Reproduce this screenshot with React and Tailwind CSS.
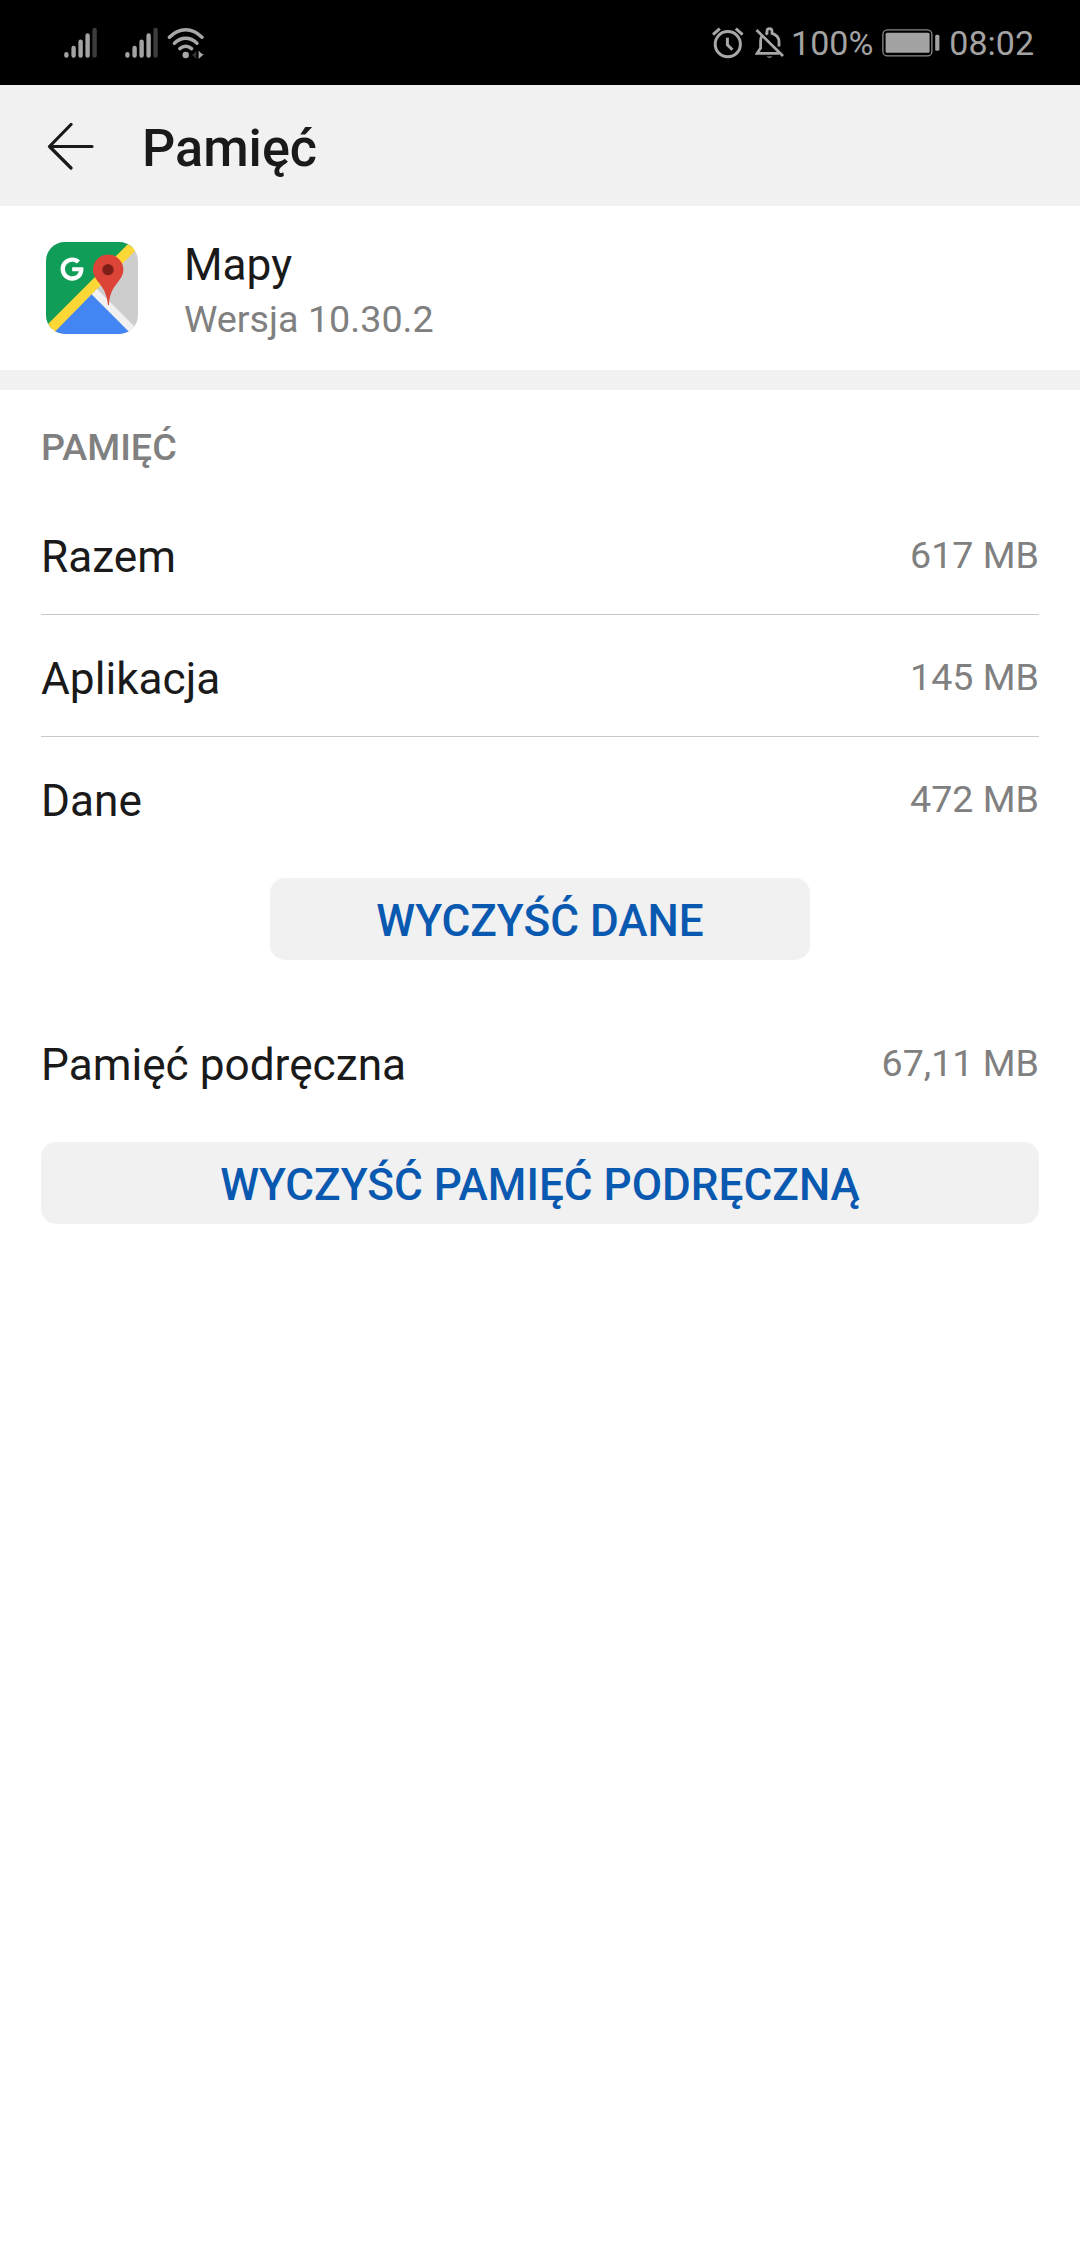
import { FaGoogle } from 'react-icons/fa';

const storage = [
  { label: 'Razem', value: '617 MB' },
  { label: 'Aplikacja', value: '145 MB' },
  { label: 'Dane', value: '472 MB' },
];

const SignalIcon = () => (
  <svg className="h-8 w-[34px]" viewBox="0 0 34 32" strokeWidth="4.4" strokeLinecap="round" stroke="#a3a3a3">
    <path d="M2.4 28.6v-1.4M9.6 28.6v-7.6M16.6 28.6V14.8M23.6 28.6V8.4" />
    <path d="M30.6 28.6V3" stroke="#3c3c3c" />
  </svg>
);

const WifiIcon = () => (
  <svg className="h-8 w-[38px]" viewBox="0 0 38 32" fill="none" stroke="#a8a8a8" strokeWidth="3.4" strokeLinecap="round">
    <path d="M2.4 10.2Q10 2.8 18.7 2.8T35 10.2" />
    <path d="M7.4 16.2Q12.6 11.2 18.7 11.2T30 16.2" />
    <path d="M12.8 21.6Q15.6 19.2 18.7 19.2T24.6 21.6" />
    <circle cx="18.7" cy="28" r="3.2" fill="#a8a8a8" stroke="none" />
    <path d="M29.4 24v8l-4.4-4z" fill="#333" stroke="none" />
    <path d="M31.6 23.5v8.5l5.2-4.8-2.4-.8z" fill="#a8a8a8" stroke="none" />
  </svg>
);

const AlarmIcon = () => (
  <svg className="h-[32px] w-[32px]" viewBox="0 0 32 32" fill="none" stroke="#a8a8a8" strokeWidth="3">
    <circle cx="15.8" cy="17.2" r="12.6" />
    <path d="M15.4 10.8v7l5 5" />
    <path d="M1 7.6l6.8-6M23.8 1.6l6.8 6" />
  </svg>
);

const BellOffIcon = () => (
  <svg className="h-[32px] w-[30px]" viewBox="0 0 30 32" fill="none" stroke="#a8a8a8" strokeWidth="2.8">
    <path d="M1.5 3L28 29" />
    <path d="M6.5 9.5Q5.6 11.5 5.6 14V21L2 26.4H24" />
    <path d="M10.5 7.2L12 6.4V4.2a2.5 2.5 0 0 1 5 0V6.4Q24 8.6 24 15V19.5" />
    <path d="M11.5 29.4Q14.5 32 17.5 29.4z" fill="#a8a8a8" stroke="none" />
  </svg>
);

const BatteryIcon = () => (
  <svg className="h-[28px] w-[58px]" viewBox="0 0 58 28">
    <rect x="0.9" y="0.9" width="49" height="26" rx="4.5" fill="none" stroke="#8a8a8a" strokeWidth="1.3" />
    <rect x="3.6" y="3.8" width="44" height="20" rx="1.5" fill="#a3a3a3" />
    <rect x="53.2" y="5.8" width="4.2" height="16" rx="1.5" fill="#a3a3a3" />
  </svg>
);

const MapsIcon = () => (
  <div className="relative h-[92px] w-[92px] overflow-hidden rounded-[19px]">
    <svg className="h-full w-full" viewBox="0 0 276 276">
      <path d="M0 0H276V276H0z" fill="#cdcdcd" />
      <path d="M0 0H276L0 276z" fill="#109d58" />
      <path d="M137 157L26 276H0V252L252 0H276V18z" fill="#fdd735" />
      <path d="M137 157L256 276H20z" fill="#4485f4" />
      <path d="M137 157L153 141L276 264V276H256z" fill="#f1f1f1" />
      <path d="M186 189C183 158 173 141 160 124C148 108 141 98 141 83a45.5 45.5 0 0 1 91 0C232 98 225 108 213 124C200 141 190 158 189 189z" fill="#dc4437" />
      <circle cx="186" cy="83" r="17" fill="#7d1f18" />
    </svg>
    <FaGoogle className="absolute left-[14px] top-[15px] h-[24px] w-[24px] text-white" />
  </div>
);

const Row = ({ label, value, divider }) => (
  <div className={`flex h-[122px] items-center justify-between border-b pt-[6px] ${divider ? 'border-[#c9c9c9]' : 'border-transparent'}`}>
    <span className="pt-[2px] text-[44.2px] text-[#1a1a1a]">{label}</span>
    <span className="pb-[2px] text-[37.6px] text-[#808080]">{value}</span>
  </div>
);

const ActionButton = ({ children, className }) => (
  <button className={`flex h-[82px] items-center justify-center rounded-[15px] bg-[#f1f1f1] pt-[4px] text-[44.1px] font-medium text-[#0a59b0] ${className}`}>
    {children}
  </button>
);

const StatusBar = () => (
  <div className="flex h-[85px] items-center justify-between bg-black pl-[64px] pr-[46px]">
    <div className="flex items-center">
      <SignalIcon />
      <div className="ml-[27px]">
        <SignalIcon />
      </div>
      <div className="ml-[8px]">
        <WifiIcon />
      </div>
    </div>
    <div className="flex items-center text-[34px] text-[#a3a3a3]">
      <AlarmIcon />
      <div className="ml-[11px]">
        <BellOffIcon />
      </div>
      <span className="ml-[6px] pt-[2px]">100%</span>
      <div className="ml-[9px] mr-[9px]">
        <BatteryIcon />
      </div>
      <span className="pt-[2px]">08:02</span>
    </div>
  </div>
);

const App = () => {
  return (
    <div className="min-h-[2244px] w-[1080px] bg-white font-['Roboto',sans-serif]">
      <StatusBar />

      <header className="flex h-[121px] items-center bg-[#f1f1f1] pl-[47px]">
        <svg className="h-[48px] w-[48px]" viewBox="0 0 48 48" fill="none" stroke="#1a1a1a" strokeWidth="3.2" strokeLinecap="round" strokeLinejoin="round">
          <path d="M45 24.5H2.5M24 2.5L2.5 24.5L24 46" />
        </svg>
        <h1 className="ml-[47px] pt-[7px] text-[52.2px] font-medium text-[#1a1a1a]">Pamięć</h1>
      </header>

      <section className="flex h-[184px] border-b-[20px] border-[#f1f1f1] pl-[46px]">
        <div className="pt-[36px]">
          <MapsIcon />
        </div>
        <div className="ml-[46px] pt-[32px]">
          <div className="text-[44.2px] leading-[54px] text-[#1a1a1a]">Mapy</div>
          <div className="mt-[4px] text-[37.7px] leading-[46px] text-[#808080]">Wersja 10.30.2</div>
        </div>
      </section>

      <main className="flex flex-col px-[41px] pt-[34px]">
        <h2 className="mb-[23px] text-[37.7px] font-medium leading-[46px] text-[#808080]">PAMIĘĆ</h2>
        {storage.map((item, i) => (
          <Row key={item.label} label={item.label} value={item.value} divider={i < storage.length - 1} />
        ))}
        <ActionButton className="mt-[19px] w-[540px] self-center">WYCZYŚĆ DANE</ActionButton>

        <div className="mt-[41px]">
          <Row label="Pamięć podręczna" value="67,11 MB" />
        </div>
        <ActionButton className="mt-[19px] w-full">WYCZYŚĆ PAMIĘĆ PODRĘCZNĄ</ActionButton>
      </main>
    </div>
  );
};

export default App;
